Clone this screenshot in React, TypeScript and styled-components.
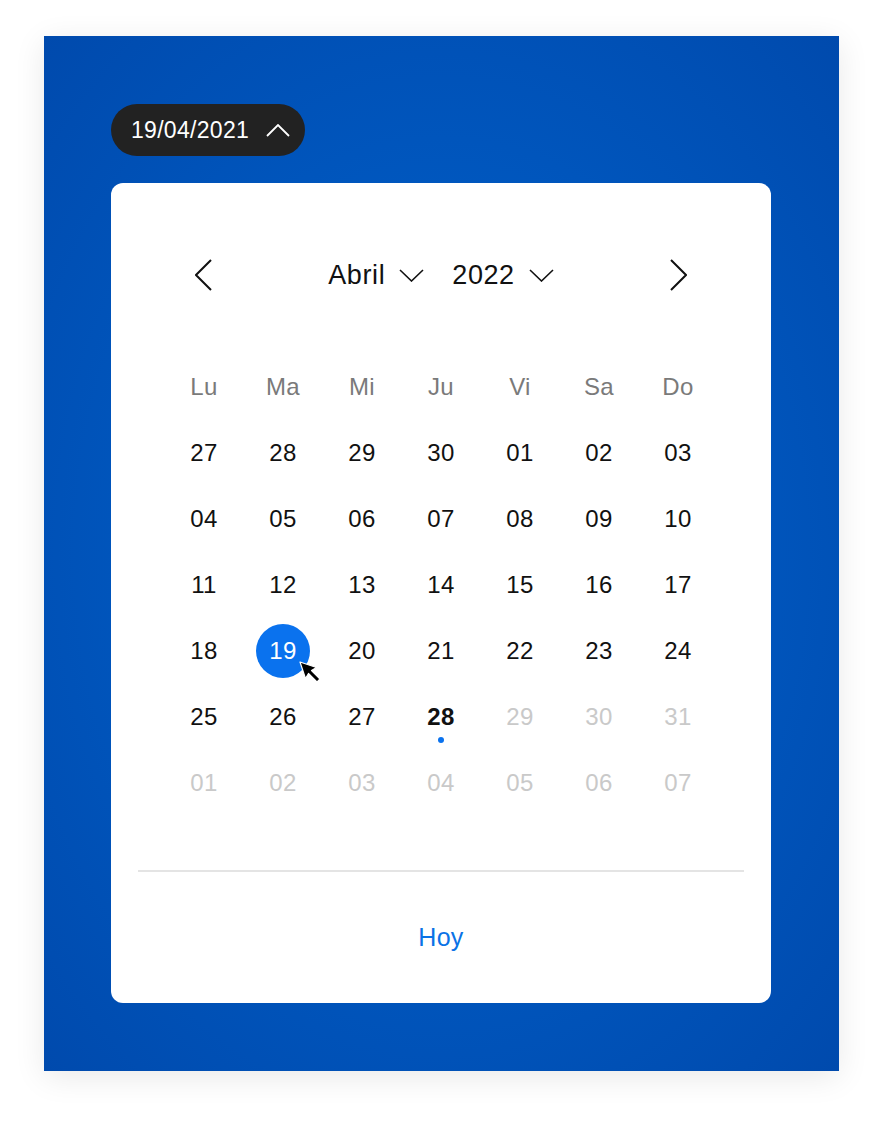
import React from 'react';
import styled, { createGlobalStyle } from 'styled-components';

const GlobalStyle = createGlobalStyle`
  html, body {
    margin: 0;
    padding: 0;
    background: #ffffff;
  }
  body {
    font-family: 'Liberation Sans', Arial, sans-serif;
    -webkit-font-smoothing: antialiased;
  }
`;

const Page = styled.div`
  padding: 36px 45px 52px 44px;
`;

const Panel = styled.div`
  width: 795px;
  height: 1035px;
  box-sizing: border-box;
  padding: 68px 67px;
  display: flex;
  flex-direction: column;
  gap: 27px;
  background: radial-gradient(ellipse at 50% 50%, #0062cc 0%, #0058c0 45%, #004aad 100%);
  box-shadow: 0 6px 30px rgba(0, 0, 0, 0.09);
`;

const Pill = styled.button`
  align-self: flex-start;
  height: 52px;
  padding: 0 15px 0 20px;
  display: flex;
  align-items: center;
  gap: 17px;
  border: none;
  border-radius: 26px;
  background: #222222;
  color: #ffffff;
  font-family: inherit;
  font-size: 23px;
  letter-spacing: 0.3px;
`;

const Card = styled.div`
  width: 660px;
  height: 820px;
  box-sizing: border-box;
  background: #ffffff;
  border-radius: 12px;
  padding: 68px 27px 0;
  display: flex;
  flex-direction: column;
`;

const Header = styled.div`
  height: 48px;
  margin: 0 26px;
  display: grid;
  grid-template-columns: 79px 1fr 79px;
  align-items: center;
`;

const NavButton = styled.button`
  border: none;
  background: none;
  padding: 0;
  display: flex;
  justify-content: center;
  align-items: center;
  color: #111;
`;

const Selects = styled.div`
  display: flex;
  justify-content: center;
  align-items: center;
  gap: 28px;
`;

const Select = styled.div`
  display: flex;
  align-items: center;
  gap: 14px;
  font-size: 27px;
  letter-spacing: 0.6px;
  color: #111;
`;

const Grid = styled.div`
  margin: 55px 26.5px 0;
  display: grid;
  grid-template-columns: repeat(7, 79px);
  grid-auto-rows: 66px;
`;

const WeekDay = styled.div`
  display: flex;
  align-items: center;
  justify-content: center;
  font-size: 24px;
  letter-spacing: 0.3px;
  color: #7a7a7a;
`;

const Day = styled.div<{ $muted?: boolean; $today?: boolean; $selected?: boolean }>`
  position: relative;
  display: flex;
  align-items: center;
  justify-content: center;
  font-size: 24px;
  letter-spacing: 0.3px;
  font-weight: ${p => (p.$today ? 700 : 400)};
  color: ${p => (p.$selected ? '#ffffff' : p.$muted ? '#c9c9c9' : '#111111')};
`;

const SelectedDisc = styled.span`
  position: absolute;
  left: 50%;
  top: 50%;
  width: 54px;
  height: 54px;
  margin: -27px 0 0 -27px;
  border-radius: 50%;
  background: #0a72ee;
`;

const DayLabel = styled.span`
  position: relative;
`;

const TodayDot = styled.span`
  position: absolute;
  left: 50%;
  top: 50%;
  width: 6px;
  height: 6px;
  margin: 20px 0 0 -3px;
  border-radius: 50%;
  background: #0a72ee;
`;

const Cursor = styled.svg`
  position: absolute;
  left: 55px;
  top: 43px;
`;

const Divider = styled.hr`
  margin: 54px 0 0;
  border: none;
  border-top: 2px solid #e4e4e4;
`;

const Footer = styled.div`
  flex: 1;
  display: flex;
  align-items: center;
  justify-content: center;
`;

const TodayButton = styled.button`
  border: none;
  background: none;
  font-family: inherit;
  font-size: 25px;
  letter-spacing: 0.3px;
  color: #0a72e6;
  padding: 0;
`;

const IconWrap = styled.span`
  display: flex;
  color: inherit;
`;

const Chevron = ({ dir, w, h, stroke = 2 }: { dir: 'left' | 'right' | 'up' | 'down'; w: number; h: number; stroke?: number }) => {
  const pts: Record<string, string> = {
    left: `${w - 1},1 1,${h / 2} ${w - 1},${h - 1}`,
    right: `1,1 ${w - 1},${h / 2} 1,${h - 1}`,
    up: `1,${h - 1} ${w / 2},1 ${w - 1},${h - 1}`,
    down: `1,1 ${w / 2},${h - 1} ${w - 1},1`,
  };
  return (
    <svg width={w} height={h} viewBox={`0 0 ${w} ${h}`} fill="none">
      <polyline points={pts[dir]} stroke="currentColor" strokeWidth={stroke} strokeLinecap="butt" strokeLinejoin="miter" />
    </svg>
  );
};

const weekDays = ['Lu', 'Ma', 'Mi', 'Ju', 'Vi', 'Sa', 'Do'];

type Cell = { label: string; muted?: boolean; today?: boolean; selected?: boolean };

const pad = (n: number) => (n < 10 ? '0' + n : String(n));

const buildCells = (): Cell[] => {
  const cells: Cell[] = [];
  [27, 28, 29, 30].forEach(d => cells.push({ label: pad(d) }));
  for (let d = 1; d <= 28; d++) {
    cells.push({ label: pad(d), selected: d === 19, today: d === 28 });
  }
  [29, 30, 31].forEach(d => cells.push({ label: pad(d), muted: true }));
  for (let d = 1; d <= 7; d++) cells.push({ label: pad(d), muted: true });
  return cells;
};

export default function App() {
  const cells = buildCells();
  return (
    <>
      <GlobalStyle />
      <Page>
        <Panel>
          <Pill>
            <span>19/04/2021</span>
            <IconWrap>
              <Chevron dir="up" w={24} h={13} stroke={1.8} />
            </IconWrap>
          </Pill>
          <Card>
            <Header>
              <NavButton>
                <Chevron dir="left" w={17} h={32} stroke={2} />
              </NavButton>
              <Selects>
                <Select>
                  Abril
                  <Chevron dir="down" w={25} h={13} stroke={1.6} />
                </Select>
                <Select>
                  2022
                  <Chevron dir="down" w={25} h={13} stroke={1.6} />
                </Select>
              </Selects>
              <NavButton>
                <Chevron dir="right" w={17} h={32} stroke={2} />
              </NavButton>
            </Header>
            <Grid>
              {weekDays.map(w => (
                <WeekDay key={w}>{w}</WeekDay>
              ))}
              {cells.map((c, i) => (
                <Day key={i} $muted={c.muted} $today={c.today} $selected={c.selected}>
                  {c.selected && <SelectedDisc />}
                  <DayLabel>{c.label}</DayLabel>
                  {c.today && <TodayDot />}
                  {c.selected && (
                    <Cursor width="24" height="24" viewBox="0 0 24 24">
                      <path
                        d="M1 1 L17.5 6.5 L12.5 9.5 L21 18 L18 21 L9.5 12.5 L6.5 17.5 Z"
                        fill="#000"
                        stroke="#fff"
                        strokeWidth="1.2"
                        strokeLinejoin="round"
                      />
                    </Cursor>
                  )}
                </Day>
              ))}
            </Grid>
            <Divider />
            <Footer>
              <TodayButton>Hoy</TodayButton>
            </Footer>
          </Card>
        </Panel>
      </Page>
    </>
  );
}
